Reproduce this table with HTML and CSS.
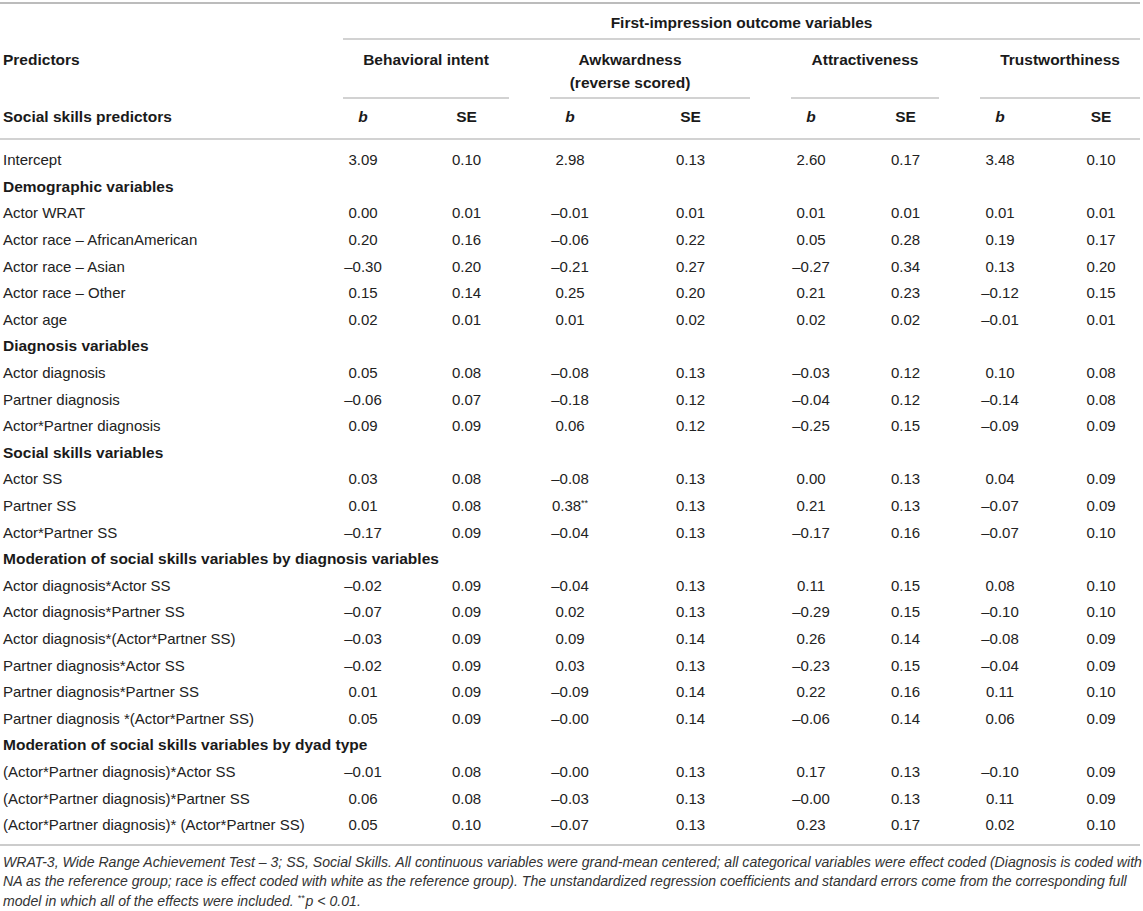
FILE: index.html
```html
<!DOCTYPE html>
<html lang="en">
<head>
<meta charset="utf-8">
<title>Table</title>
<link rel="stylesheet" href="styles.css">
</head>
<body>
<table class="stats">
  <colgroup>
    <col class="c-pred"><col class="c-b"><col class="c-se1"><col class="c-b"><col class="c-se2"><col class="c-b"><col class="c-se3"><col class="c-b"><col class="c-se4">
  </colgroup>
  <thead>
    <tr class="h1">
      <th></th>
      <th colspan="8" class="top-group">First-impression outcome variables</th>
    </tr>
    <tr class="h2">
      <th class="pred">Predictors</th>
      <th colspan="2" class="grp"><div class="uline">Behavioral intent</div></th>
      <th colspan="2" class="grp"><div class="uline awk">Awkwardness<br>(reverse scored)</div></th>
      <th colspan="2" class="grp"><div class="uline">Attractiveness</div></th>
      <th colspan="2" class="grp"><div class="uline last">Trustworthiness</div></th>
    </tr>
    <tr class="h3">
      <th class="pred">Social skills predictors</th>
      <th><i>b</i></th><th>SE</th>
      <th><i>b</i></th><th>SE</th>
      <th><i>b</i></th><th>SE</th>
      <th><i>b</i></th><th class="se4">SE</th>
    </tr>
  </thead>
  <tbody>
    <tr class="first"><td class="pred">Intercept</td><td>3.09</td><td>0.10</td><td>2.98</td><td>0.13</td><td>2.60</td><td>0.17</td><td>3.48</td><td class="se4">0.10</td></tr>
    <tr class="sec"><td colspan="9" class="pred">Demographic variables</td></tr>
    <tr><td class="pred">Actor WRAT</td><td>0.00</td><td>0.01</td><td>–0.01</td><td>0.01</td><td>0.01</td><td>0.01</td><td>0.01</td><td class="se4">0.01</td></tr>
    <tr><td class="pred">Actor race – AfricanAmerican</td><td>0.20</td><td>0.16</td><td>–0.06</td><td>0.22</td><td>0.05</td><td>0.28</td><td>0.19</td><td class="se4">0.17</td></tr>
    <tr><td class="pred">Actor race – Asian</td><td>–0.30</td><td>0.20</td><td>–0.21</td><td>0.27</td><td>–0.27</td><td>0.34</td><td>0.13</td><td class="se4">0.20</td></tr>
    <tr><td class="pred">Actor race – Other</td><td>0.15</td><td>0.14</td><td>0.25</td><td>0.20</td><td>0.21</td><td>0.23</td><td>–0.12</td><td class="se4">0.15</td></tr>
    <tr><td class="pred">Actor age</td><td>0.02</td><td>0.01</td><td>0.01</td><td>0.02</td><td>0.02</td><td>0.02</td><td>–0.01</td><td class="se4">0.01</td></tr>
    <tr class="sec"><td colspan="9" class="pred">Diagnosis variables</td></tr>
    <tr><td class="pred">Actor diagnosis</td><td>0.05</td><td>0.08</td><td>–0.08</td><td>0.13</td><td>–0.03</td><td>0.12</td><td>0.10</td><td class="se4">0.08</td></tr>
    <tr><td class="pred">Partner diagnosis</td><td>–0.06</td><td>0.07</td><td>–0.18</td><td>0.12</td><td>–0.04</td><td>0.12</td><td>–0.14</td><td class="se4">0.08</td></tr>
    <tr><td class="pred">Actor*Partner diagnosis</td><td>0.09</td><td>0.09</td><td>0.06</td><td>0.12</td><td>–0.25</td><td>0.15</td><td>–0.09</td><td class="se4">0.09</td></tr>
    <tr class="sec"><td colspan="9" class="pred">Social skills variables</td></tr>
    <tr><td class="pred">Actor SS</td><td>0.03</td><td>0.08</td><td>–0.08</td><td>0.13</td><td>0.00</td><td>0.13</td><td>0.04</td><td class="se4">0.09</td></tr>
    <tr><td class="pred">Partner SS</td><td>0.01</td><td>0.08</td><td>0.38<sup>**</sup></td><td>0.13</td><td>0.21</td><td>0.13</td><td>–0.07</td><td class="se4">0.09</td></tr>
    <tr><td class="pred">Actor*Partner SS</td><td>–0.17</td><td>0.09</td><td>–0.04</td><td>0.13</td><td>–0.17</td><td>0.16</td><td>–0.07</td><td class="se4">0.10</td></tr>
    <tr class="sec"><td colspan="9" class="pred">Moderation of social skills variables by diagnosis variables</td></tr>
    <tr><td class="pred">Actor diagnosis*Actor SS</td><td>–0.02</td><td>0.09</td><td>–0.04</td><td>0.13</td><td>0.11</td><td>0.15</td><td>0.08</td><td class="se4">0.10</td></tr>
    <tr><td class="pred">Actor diagnosis*Partner SS</td><td>–0.07</td><td>0.09</td><td>0.02</td><td>0.13</td><td>–0.29</td><td>0.15</td><td>–0.10</td><td class="se4">0.10</td></tr>
    <tr><td class="pred">Actor diagnosis*(Actor*Partner SS)</td><td>–0.03</td><td>0.09</td><td>0.09</td><td>0.14</td><td>0.26</td><td>0.14</td><td>–0.08</td><td class="se4">0.09</td></tr>
    <tr><td class="pred">Partner diagnosis*Actor SS</td><td>–0.02</td><td>0.09</td><td>0.03</td><td>0.13</td><td>–0.23</td><td>0.15</td><td>–0.04</td><td class="se4">0.09</td></tr>
    <tr><td class="pred">Partner diagnosis*Partner SS</td><td>0.01</td><td>0.09</td><td>–0.09</td><td>0.14</td><td>0.22</td><td>0.16</td><td>0.11</td><td class="se4">0.10</td></tr>
    <tr><td class="pred">Partner diagnosis *(Actor*Partner SS)</td><td>0.05</td><td>0.09</td><td>–0.00</td><td>0.14</td><td>–0.06</td><td>0.14</td><td>0.06</td><td class="se4">0.09</td></tr>
    <tr class="sec"><td colspan="9" class="pred">Moderation of social skills variables by dyad type</td></tr>
    <tr><td class="pred">(Actor*Partner diagnosis)*Actor SS</td><td>–0.01</td><td>0.08</td><td>–0.00</td><td>0.13</td><td>0.17</td><td>0.13</td><td>–0.10</td><td class="se4">0.09</td></tr>
    <tr><td class="pred">(Actor*Partner diagnosis)*Partner SS</td><td>0.06</td><td>0.08</td><td>–0.03</td><td>0.13</td><td>–0.00</td><td>0.13</td><td>0.11</td><td class="se4">0.09</td></tr>
    <tr class="last"><td class="pred">(Actor*Partner diagnosis)* (Actor*Partner SS)</td><td>0.05</td><td>0.10</td><td>–0.07</td><td>0.13</td><td>0.23</td><td>0.17</td><td>0.02</td><td class="se4">0.10</td></tr>
  </tbody>
</table>
<p class="note"><i>WRAT-3, Wide Range Achievement Test – 3; SS, Social Skills. All continuous variables were grand-mean centered; all categorical variables were effect coded (Diagnosis is coded with<br>NA as the reference group; race is effect coded with white as the reference group). The unstandardized regression coefficients and standard errors come from the corresponding full<br>model in which all of the effects were included. <sup class="fn">**</sup><span class="pv">p</span> &lt; 0.01.</i></p>
</body>
</html>
```
FILE: styles.css
```css
html, body {
  margin: 0;
  padding: 0;
  background: #ffffff;
}

body {
  font-family: "Liberation Sans", Arial, Helvetica, sans-serif;
  color: #222222;
  padding-top: 2px;
}

.stats {
  width: 1140px;
  table-layout: fixed;
  border-collapse: separate;
  border-spacing: 0;
  border-top: 2px solid #bcbcbc;
  border-bottom: 2px solid #cccccc;
}

.c-pred { width: 343px; }
.c-b { width: 40px; }
.c-se1 { width: 167px; }
.c-se2 { width: 201px; }
.c-se3 { width: 149px; }
.c-se4 { width: 120px; }

.stats th {
  font-weight: bold;
  font-size: 15.5px;
  color: #1a1a1a;
  text-align: center;
  padding: 0;
}

.stats th.pred,
.stats td.pred {
  text-align: left;
  padding-left: 3px;
}

.h1 th {
  line-height: 20px;
  padding: 9px 0 5px;
}

.h1 th.top-group {
  border-bottom: 2px solid #d2d2d2;
}

.h2 th {
  vertical-align: top;
  line-height: 23px;
  padding-top: 8px;
}

.h2 th.pred {
  padding-bottom: 5px;
}

.uline {
  height: 46px;
  padding-bottom: 3px;
  border-bottom: 2px solid #d2d2d2;
  margin-right: 41px;
}

.uline.awk {
  padding-right: 40px;
}

.uline.last {
  margin-right: 0;
}

.h3 th {
  line-height: 23px;
  padding: 6px 0 10px;
  border-bottom: 2px solid #d2d2d2;
}

.stats th.se4,
.stats td.se4 {
  padding-left: 42px;
}

.stats td {
  font-size: 15px;
  line-height: 20px;
  padding: 3.3px 0;
  text-align: center;
  white-space: nowrap;
  color: #222222;
}

.sec td.pred {
  font-weight: bold;
  font-size: 15.5px;
  color: #1a1a1a;
}

.first td {
  padding-top: 10.3px;
}

.last td {
  padding-bottom: 8.8px;
}

sup {
  font-size: 9px;
  line-height: 0;
  vertical-align: 5px;
}

sup.fn {
  margin-right: 1px;
}

.note {
  margin: 7px 0 0 3px;
  width: 1160px;
  font-size: 14.1px;
  line-height: 19.5px;
  color: #333333;
}
```
